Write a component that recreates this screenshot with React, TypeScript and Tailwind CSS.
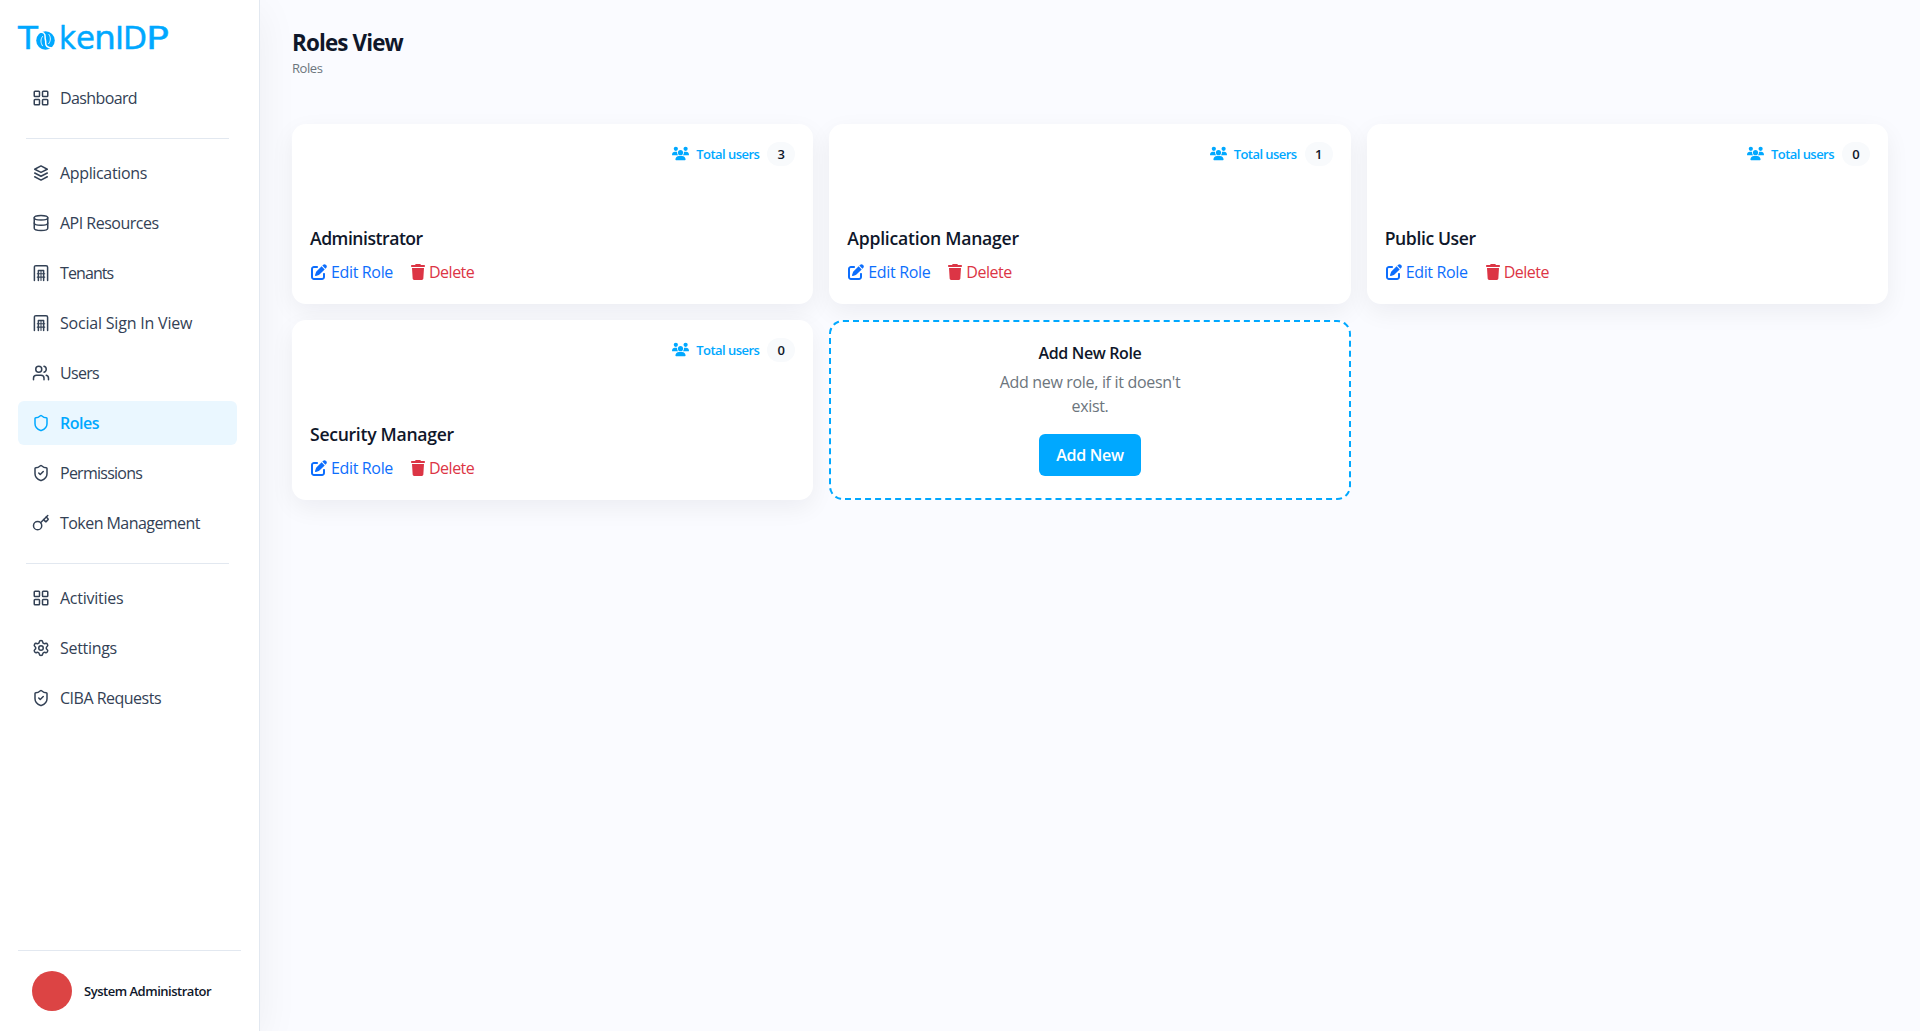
import type { ReactNode } from "react";
import { Database, Key, LayoutGrid, Settings, Shield, ShieldCheck, Users } from "lucide-react";
import { FaPenToSquare, FaTrash, FaUsers } from "react-icons/fa6";

function StackIcon() {
  return (
    <svg width="18" height="18" viewBox="0 0 24 24" fill="none" stroke="currentColor" strokeWidth="2" strokeLinecap="round" strokeLinejoin="round">
      <path d="M12 2.600 3.600 7l8.400 4.200L20.400 7z" />
      <path d="m3.600 12 8.400 4.300 8.400-4.300" />
      <path d="m3.600 17 8.400 4.400 8.400-4.400" />
    </svg>
  );
}

function TenantIcon() {
  return (
    <svg width="18" height="18" viewBox="0 0 24 24" fill="none" stroke="currentColor" strokeWidth="2" strokeLinecap="round" strokeLinejoin="round">
      <path d="M3.200 22V4.200a2 2 0 0 1 2-2h13.600a2 2 0 0 1 2 2V22" />
      <path d="M8.500 22V8.500h7V22" />
      <path d="M7 13h10M7 17.500h10M12 9v13" strokeWidth="1.400" />
    </svg>
  );
}

function Logo() {
  return (
    <svg className="-ml-1" width="164" height="48" viewBox="-4 -8 164 48" fill="#00a8ff" stroke="#00a8ff" strokeWidth="0.400" fontFamily="'DejaVu Sans', sans-serif" fontSize="31.500">
      <text x="0" y="25" textLength="20" lengthAdjust="spacingAndGlyphs">T</text>
      <circle cx="27.500" cy="16.500" r="9.300" stroke="none" />
      <g fill="none" stroke="#fff" strokeLinecap="round">
        <path d="M20.500 8.200c4.500-.6 7 1.200 6.600 4.600-.3 2.600.9 3.400.6 5.900-.3 2.800 1.600 5.300 6 5.300" strokeWidth="1.500" />
        <path d="M24.500 12.500c-2.200 2.700-2 6.500 0 9.300" strokeWidth="0.900" />
        <path d="M31 10.500c2 2.800 1.900 6.200-.3 9.200" strokeWidth="0.900" />
      </g>
      <text x="41" y="25" textLength="17" lengthAdjust="spacingAndGlyphs">k</text>
      <text x="58" y="25" textLength="19" lengthAdjust="spacingAndGlyphs">e</text>
      <text x="76" y="25" textLength="22" lengthAdjust="spacingAndGlyphs">n</text>
      <text x="97" y="25" textLength="9" lengthAdjust="spacingAndGlyphs">I</text>
      <text x="105" y="25" textLength="24" lengthAdjust="spacingAndGlyphs">D</text>
      <text x="128" y="25" textLength="23" lengthAdjust="spacingAndGlyphs">P</text>
    </svg>
  );
}

type NavItemProps = { icon: ReactNode; label: string; tracking: string; active?: boolean };

function NavItem({ icon, label, tracking, active = false }: NavItemProps) {
  return (
    <a
      className={
        active
          ? "flex h-11 w-[219px] items-center gap-2.5 rounded-md bg-[#eaf7ff] px-3.5 font-semibold text-[#00a8ff]"
          : "flex h-11 w-[219px] items-center gap-2.5 rounded-md px-3.5 text-[#334155]"
      }
    >
      {icon}
      <span className={`whitespace-nowrap ${tracking}`}>{label}</span>
    </a>
  );
}

type RoleCardProps = { name: string; total: number; tracking: string };

function RoleCard({ name, total, tracking }: RoleCardProps) {
  return (
    <div className="flex h-[180px] flex-col rounded-[14px] bg-white px-[18px] pt-[18px] shadow-[0_8px_24px_rgba(15,23,42,0.06)]">
      <div className="flex h-6 items-center justify-end text-[13px] font-semibold text-[#00a8ff]">
        <FaUsers size={17} className="mb-0.5" />
        <span className="ml-[7px] w-[63px] pt-0.5 tracking-[-0.550px] whitespace-nowrap">Total users</span>
        <span className="ml-2 flex h-6 w-7 items-center justify-center rounded-full bg-[#f8fafc] pt-0.5 text-[#0f172a]">{total}</span>
      </div>
      <h5 className={`mt-[58px] text-[17.600px] leading-7 font-semibold text-[#0f172a] ${tracking}`}>{name}</h5>
      <div className="mt-2 flex h-6 items-center">
        <a className="flex w-[100px] items-center gap-1 pl-px tracking-[-0.350px] text-[#0d6efd]">
          <FaPenToSquare size={16} />
          Edit Role
        </a>
        <a className="flex items-center gap-[3px] tracking-[-0.500px] text-[#dc3545]">
          <FaTrash size={16} />
          Delete
        </a>
      </div>
    </div>
  );
}

const roles = [
  { name: "Administrator", total: 3, tracking: "tracking-[-0.480px]" },
  { name: "Application Manager", total: 1, tracking: "tracking-[-0.230px]" },
  { name: "Public User", total: 0, tracking: "tracking-[-0.400px]" },
  { name: "Security Manager", total: 0, tracking: "tracking-[-0.290px]" },
];

export default function App() {
  return (
    <div className="flex h-screen w-full overflow-hidden bg-[#fafbff] font-['Open_Sans',sans-serif] text-base">
      <aside className="relative flex w-[260px] shrink-0 flex-col border-r border-[#e2e8f0] bg-white px-[18px] shadow-[0_10px_40px_rgba(15,23,42,0.06)]">
        <div className="h-[76px] pt-4">
          <Logo />
        </div>
        <nav className="flex flex-col gap-1.5">
          <NavItem icon={<LayoutGrid size={18} />} label="Dashboard" tracking="tracking-[-0.620px]" />
          <hr className="mx-2 mt-3 mb-1.5 w-[203px] border-[#e2e8f0]" />
          <NavItem icon={<StackIcon />} label="Applications" tracking="tracking-[-0.350px]" />
          <NavItem icon={<Database size={18} />} label="API Resources" tracking="tracking-[-0.500px]" />
          <NavItem icon={<TenantIcon />} label="Tenants" tracking="tracking-[-0.900px]" />
          <NavItem icon={<TenantIcon />} label="Social Sign In View" tracking="tracking-[-0.200px]" />
          <NavItem icon={<Users size={18} />} label="Users" tracking="tracking-[-0.700px]" />
          <NavItem icon={<Shield size={18} />} label="Roles" tracking="tracking-[-0.500px]" active />
          <NavItem icon={<ShieldCheck size={18} />} label="Permissions" tracking="tracking-[-0.750px]" />
          <NavItem icon={<Key size={18} />} label="Token Management" tracking="tracking-[-0.550px]" />
          <hr className="mx-2 mt-3 mb-1.5 w-[203px] border-[#e2e8f0]" />
          <NavItem icon={<LayoutGrid size={18} />} label="Activities" tracking="tracking-[-0.250px]" />
          <NavItem icon={<Settings size={18} />} label="Settings" tracking="tracking-[-0.300px]" />
          <NavItem icon={<ShieldCheck size={18} />} label="CIBA Requests" tracking="tracking-[-0.500px]" />
        </nav>
        <div className="mt-auto flex h-[81px] items-start gap-3 border-t border-[#e2e8f0] px-3.5 pt-5">
          <div className="size-10 rounded-full bg-[#dc4444]" />
          <span className="text-[13px] leading-10 font-semibold tracking-[-0.480px] whitespace-nowrap text-[#0f172a]">System Administrator</span>
        </div>
      </aside>

      <main className="flex-1 px-8 pt-[25px]">
        <header className="h-[99px]">
          <h1 className="text-[22.400px] leading-9 font-bold tracking-[-0.850px] text-[#0f172a]">Roles View</h1>
          <p className="-mt-px text-[13px] leading-4 tracking-[-0.450px] text-[#6c757d]">Roles</p>
        </header>
        <div className="grid grid-cols-3 gap-4">
          {roles.map((role) => (
            <RoleCard key={role.name} name={role.name} total={role.total} tracking={role.tracking} />
          ))}
          <div className="flex h-[180px] flex-col items-center rounded-[14px] border-2 border-dashed border-[#00a8ff] bg-white pt-[19px] text-center">
            <h6 className="leading-6 font-semibold tracking-[-0.360px] text-[#0f172a]">Add New Role</h6>
            <p className="mt-[5px] w-[190px] leading-6 tracking-[-0.320px] text-[#6c757d]">Add new role, if it doesn't exist.</p>
            <button className="mt-4 h-[42px] w-[102px] rounded-md bg-[#00a8ff] font-semibold tracking-[-0.300px] text-white">Add New</button>
          </div>
        </div>
      </main>
    </div>
  );
}
